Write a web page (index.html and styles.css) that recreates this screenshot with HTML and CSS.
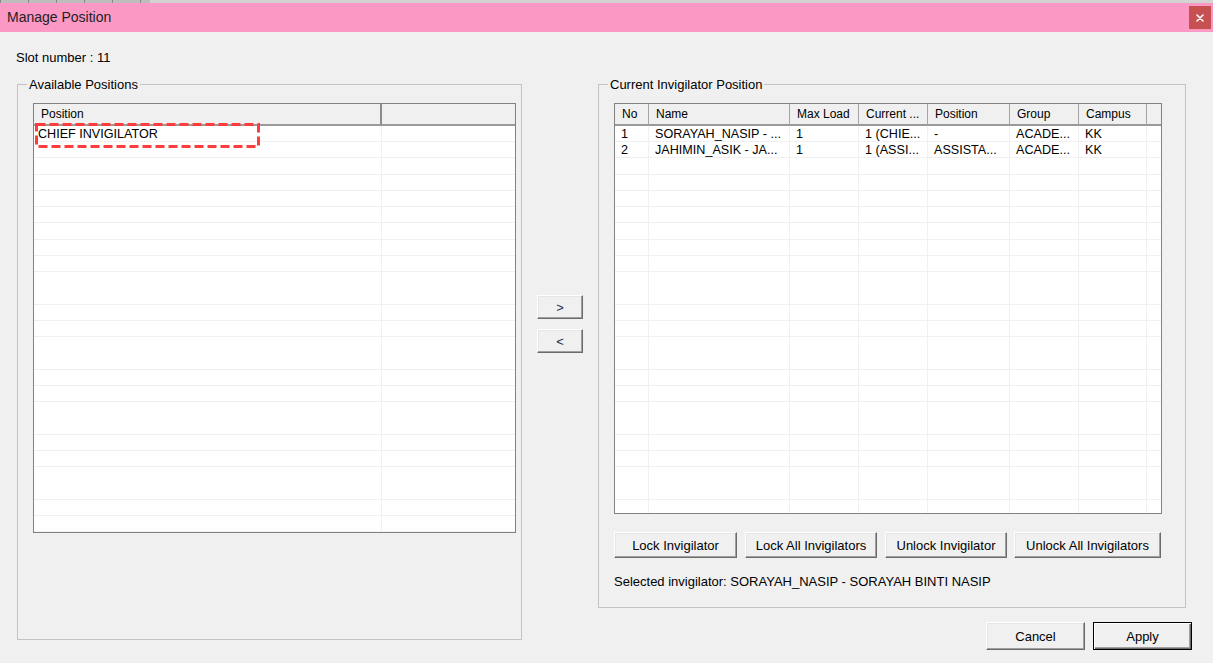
FILE: index.html
```html
<!DOCTYPE html>
<html lang="en">

<head>
    <meta charset="UTF-8">
    <meta name="viewport" content="width=device-width, initial-scale=1.0">
    <title>Manage Position</title>
    <link rel="stylesheet" href="styles.css">
</head>

<body>
    <div class="topstrip"><div class="tabs"></div></div>

    <div class="titlebar">
        <span class="title">Manage Position</span>
        <button class="close" title="Close">
            <svg width="8" height="8" viewBox="0 0 8 8">
                <path d="M1 1 L7 7 M7 1 L1 7" stroke="#fff" stroke-width="1.6" stroke-linecap="round" />
            </svg>
        </button>
    </div>

    <div class="slot">Slot number : 11</div>

    <div class="panes">
        <!-- positions that can still be given out -->
        <fieldset class="group group-left">
            <legend>Available Positions</legend>
            <div class="list list-left">
                <table>
                    <colgroup>
                        <col class="c-pos">
                        <col>
                    </colgroup>
                    <thead>
                        <tr><th class="th-wide">Position</th><th></th></tr>
                    </thead>
                    <tbody>
                        <tr><td>CHIEF INVIGILATOR</td><td></td></tr>
                        <tr class="filler"><td></td><td></td></tr>
                    </tbody>
                </table>
                <svg class="marker" width="225" height="25" viewBox="0 0 225 25">
                    <rect x="1.5" y="1.5" width="222" height="22" fill="none" stroke="#ff3c3c" stroke-width="3" stroke-dasharray="9 4" />
                </svg>
            </div>
        </fieldset>

        <div class="movers">
            <button class="btn btn-move">&gt;</button>
            <button class="btn btn-move">&lt;</button>
        </div>

        <div class="right-col">
            <fieldset class="group group-right">
                <legend>Current Invigilator Position</legend>
                <div class="list list-right">
                    <table>
                        <colgroup>
                            <col class="c-no">
                            <col class="c-name">
                            <col class="c-load">
                            <col class="c-current">
                            <col class="c-position">
                            <col class="c-group">
                            <col class="c-campus">
                            <col>
                        </colgroup>
                        <thead>
                            <tr>
                                <th>No</th>
                                <th>Name</th>
                                <th>Max Load</th>
                                <th>Current ...</th>
                                <th>Position</th>
                                <th>Group</th>
                                <th>Campus</th>
                                <th></th>
                            </tr>
                        </thead>
                        <tbody>
                            <tr>
                                <td>1</td>
                                <td>SORAYAH_NASIP - ...</td>
                                <td>1</td>
                                <td>1 (CHIE...</td>
                                <td>-</td>
                                <td>ACADE...</td>
                                <td>KK</td>
                                <td></td>
                            </tr>
                            <tr>
                                <td>2</td>
                                <td>JAHIMIN_ASIK - JA...</td>
                                <td>1</td>
                                <td>1 (ASSI...</td>
                                <td>ASSISTA...</td>
                                <td>ACADE...</td>
                                <td>KK</td>
                                <td></td>
                            </tr>
                            <tr class="filler">
                                <td></td><td></td><td></td><td></td><td></td><td></td><td></td><td></td>
                            </tr>
                        </tbody>
                    </table>
                </div>

                <div class="actions">
                    <button class="btn w-lock">Lock Invigilator</button>
                    <button class="btn w-lock-all">Lock All Invigilators</button>
                    <button class="btn w-unlock">Unlock Invigilator</button>
                    <button class="btn w-unlock-all">Unlock All Invigilators</button>
                </div>
                <div class="selected">Selected invigilator: SORAYAH_NASIP - SORAYAH BINTI NASIP</div>
            </fieldset>

            <div class="dialog-buttons">
                <button class="btn btn-dialog">Cancel</button>
                <button class="btn btn-dialog btn-default">Apply</button>
            </div>
        </div>
    </div>
</body>

</html>
```

FILE: styles.css
```css
body {
    margin: 0;
    height: 663px;
    overflow: hidden;
    background: #f0f0f0;
    color: #000;
    font-family: "Liberation Sans", Arial, sans-serif;
    font-size: 13px;
    line-height: 15px;
}

button {
    font-family: inherit;
    font-size: 13px;
    color: #000;
}

/* thin strip of the window behind */
.topstrip {
    height: 3px;
    background: #d3d3d3;
}

.tabs {
    width: 150px;
    height: 3px;
    background: repeating-linear-gradient(to right, #8a8a8a 0, #8a8a8a 1px, #bdbdbd 1px, #bdbdbd 28px);
}

.titlebar {
    display: flex;
    align-items: center;
    justify-content: space-between;
    height: 29px;
    padding-left: 7px;
    background: #fb98c4;
}

.title {
    font-size: 14px;
    color: #222;
}

.close {
    display: flex;
    align-items: center;
    justify-content: center;
    width: 22px;
    height: 23px;
    margin-right: 2px;
    padding: 0;
    border: none;
    background: #c75050;
}

.slot {
    margin-top: 18px;
    padding-left: 16px;
}

.panes {
    display: flex;
    align-items: flex-start;
    margin-top: 12px;
    padding-left: 17px;
}

/* group boxes */
.group {
    box-sizing: border-box;
    margin: 0;
    padding: 0 0 0 15px;
    border: 1px solid #c3c3c3;
}

.group legend {
    margin-left: -6px;
    padding: 0 2px;
    line-height: 15px;
}

.group-left {
    width: 505px;
    height: 563px;
}

.group-right {
    width: 588px;
    height: 531px;
}

/* list views */
.list {
    position: relative;
    box-sizing: border-box;
    margin-top: 11px;
    border: 1px solid #828282;
    overflow: hidden;
    background: repeating-linear-gradient(to bottom, transparent 0, transparent 15.25px, #f0f0f0 15.25px, #f0f0f0 16.25px) 0 22px, #fff;
}

.list-left {
    width: 483px;
    height: 430px;
}

.list-right {
    width: 548px;
    height: 411px;
}

.list table {
    width: 100%;
    height: 100%;
    table-layout: fixed;
    border-collapse: separate;
    border-spacing: 0;
}

.list th {
    height: 20px;
    padding: 0 0 0 7px;
    background: #f0f0f0;
    border-right: 1px solid #a5a5a5;
    border-bottom: 2px solid #9a9a9a;
    font-size: 12px;
    font-weight: normal;
    text-align: left;
    white-space: nowrap;
    overflow: hidden;
}

.list th:last-child {
    border-right: none;
}

.list .th-wide {
    border-right: 2px solid #8c8c8c;
}

.list td {
    height: 16.25px;
    padding: 0 0 0 6px;
    border-right: 1px solid #f0f0f0;
    font-size: 12.6px;
    white-space: nowrap;
    overflow: hidden;
}

.list-left td {
    padding-left: 4px;
}

.list td:last-child {
    border-right: none;
}

.list .filler td {
    height: auto;
}

.c-pos { width: 348px; }
.c-no { width: 34px; }
.c-name { width: 141px; }
.c-load { width: 69px; }
.c-current { width: 69px; }
.c-position { width: 82px; }
.c-group { width: 69px; }
.c-campus { width: 68px; }

/* red dashed frame round the chosen row */
.marker {
    position: absolute;
    left: 1px;
    top: 19px;
}

/* classic 3d buttons */
.btn {
    box-sizing: border-box;
    padding: 0;
    background: #f0f0f0;
    border: 1px solid;
    border-color: #fff #6b6b6b #6b6b6b #fff;
    box-shadow: inset -1px -1px 0 #a0a0a0, inset 1px 1px 0 #e6e6e6;
}

.movers {
    display: flex;
    flex-direction: column;
    gap: 10px;
    width: 46px;
    margin: 0 15px;
    padding-top: 218px;
}

.btn-move {
    width: 46px;
    height: 24px;
    color: #1c2b4a;
}

.right-col {
    width: 594px;
}

.actions {
    display: flex;
    gap: 8px;
    margin-top: 18px;
}

.actions .btn {
    height: 26px;
}

.w-lock { width: 123px; }
.w-lock-all { width: 132px; }
.w-unlock { width: 122px; }
.w-unlock-all { width: 147px; margin-left: -1px; }

.selected {
    margin-top: 16px;
}

.dialog-buttons {
    display: flex;
    justify-content: flex-end;
    gap: 8px;
    margin-top: 14px;
}

.btn-dialog {
    width: 99px;
    height: 28px;
}

.btn-default {
    border: 1px solid #000;
    box-shadow: inset 1px 1px 0 #fff, inset -1px -1px 0 #6b6b6b, inset -2px -2px 0 #a0a0a0;
}
```
